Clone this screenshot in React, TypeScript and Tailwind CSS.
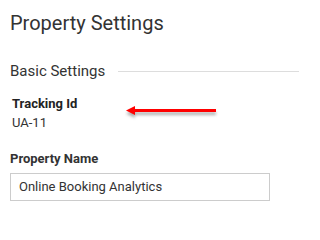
import React from "react";

export default function App() {
  return (
    <div className="relative w-[299px] h-[214px] bg-white overflow-hidden text-[#333333]" style={{ fontFamily: "Roboto, 'Liberation Sans', sans-serif" }}>
      <div className="pl-[10px] pt-[9px]">
        <h1 className="text-[20px] leading-[28px] font-normal text-[#333333]">Property Settings</h1>
        <div className="mt-[22px] flex items-center gap-[13px]">
          <span className="text-[15px] leading-[24px] text-[#333333] whitespace-nowrap">Basic Settings</span>
          <div className="flex-1 h-px bg-[#dddddd]" />
        </div>
        <div className="mt-[13px] pl-[2px]">
          <div className="text-[13px] leading-[16px] font-bold text-[#222222]">Tracking Id</div>
          <div className="mt-[3px] text-[13px] leading-[16px] text-[#333333]">UA-11</div>
        </div>
        <div className="mt-[18px] text-[13px] leading-[20px] font-bold text-[#333333]">Property Name</div>
        <div className="mt-[4px] w-[260px] h-[28px] border border-[#cccccc] pl-[8px] text-[13px] leading-[26px] text-[#333333]">
          Online Booking Analytics
        </div>
      </div>
      <svg className="absolute left-[120px] top-[100px]" width="104" height="22" viewBox="0 0 104 22">
        <defs>
          <filter id="sh" x="-20%" y="-100%" width="140%" height="300%">
            <feGaussianBlur stdDeviation="1.5" />
          </filter>
        </defs>
        <g filter="url(#sh)" fill="#9a9a9a" opacity="0.8">
          <rect x="14" y="12" width="82" height="3" />
          <polygon points="6,13.5 15,9 15,18" />
        </g>
        <rect x="13" y="9" width="83" height="3" fill="#ff0000" />
        <polygon points="6,10.5 15,6 15,15" fill="#ff0000" />
      </svg>
    </div>
  );
}
